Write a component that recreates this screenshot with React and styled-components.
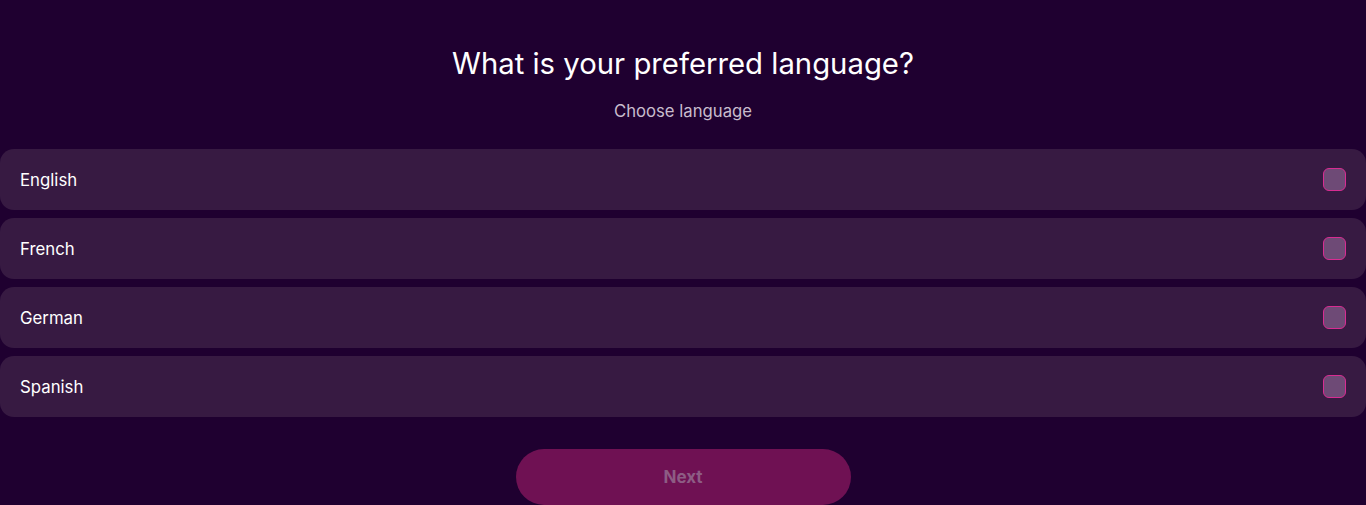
import React, { useState } from "react";
import styled, { createGlobalStyle } from "styled-components";

const Global = createGlobalStyle`
  html, body { margin: 0; padding: 0; background: #1f0030; }
  body { font-family: "Inter", "Noto Sans", sans-serif; -webkit-font-smoothing: antialiased; }
`;

const Page = styled.div`
  min-height: 505px;
  background: #1f0030;
  display: flex;
  flex-direction: column;
  align-items: center;
  padding-top: 45px;
  box-sizing: border-box;
`;

const Title = styled.h1`
  margin: 0;
  font-size: 29.3px;
  line-height: 38px;
  font-weight: 400;
  color: #ffffff;
`;

const Subtitle = styled.p`
  margin: 18px 0 0;
  font-size: 16.7px;
  line-height: 20px;
  color: #c8bccd;
`;

const List = styled.div`
  width: 100%;
  margin-top: 28px;
  display: flex;
  flex-direction: column;
  gap: 8px;
`;

const Row = styled.label`
  height: 61px;
  box-sizing: border-box;
  padding: 0 20px;
  display: flex;
  align-items: center;
  justify-content: space-between;
  background: #371a42;
  border-radius: 14px;
  color: #ffffff;
  font-size: 16.8px;
  line-height: 20px;
  cursor: pointer;
`;

const Label = styled.span`
  margin-top: 0;
`;

const Box = styled.span`
  width: 23px;
  height: 23px;
  box-sizing: border-box;
  border-radius: 6px;
  border: 1px solid ${p => (p.$checked ? "#ff2fa0" : "#d82c92")};
  background: ${p => (p.$checked ? "#a0307a" : "#6e4a76")};
`;

const Next = styled.button`
  margin-top: 32px;
  width: 335px;
  height: 56px;
  border: none;
  border-radius: 28px;
  background: #6f1153;
  color: #8d5c84;
  font-family: inherit;
  font-size: 17px;
  font-weight: 700;
`;

const langs = ["English", "French", "German", "Spanish"];

export default function App() {
  const [sel, setSel] = useState(null);
  return (
    <>
      <Global />
      <Page>
        <Title>What is your preferred language?</Title>
        <Subtitle>Choose language</Subtitle>
        <List>
          {langs.map(l => (
            <Row key={l} onClick={() => setSel(l)}>
              <Label>{l}</Label>
              <Box $checked={sel === l} />
            </Row>
          ))}
        </List>
        <Next disabled={!sel}>Next</Next>
      </Page>
    </>
  );
}
